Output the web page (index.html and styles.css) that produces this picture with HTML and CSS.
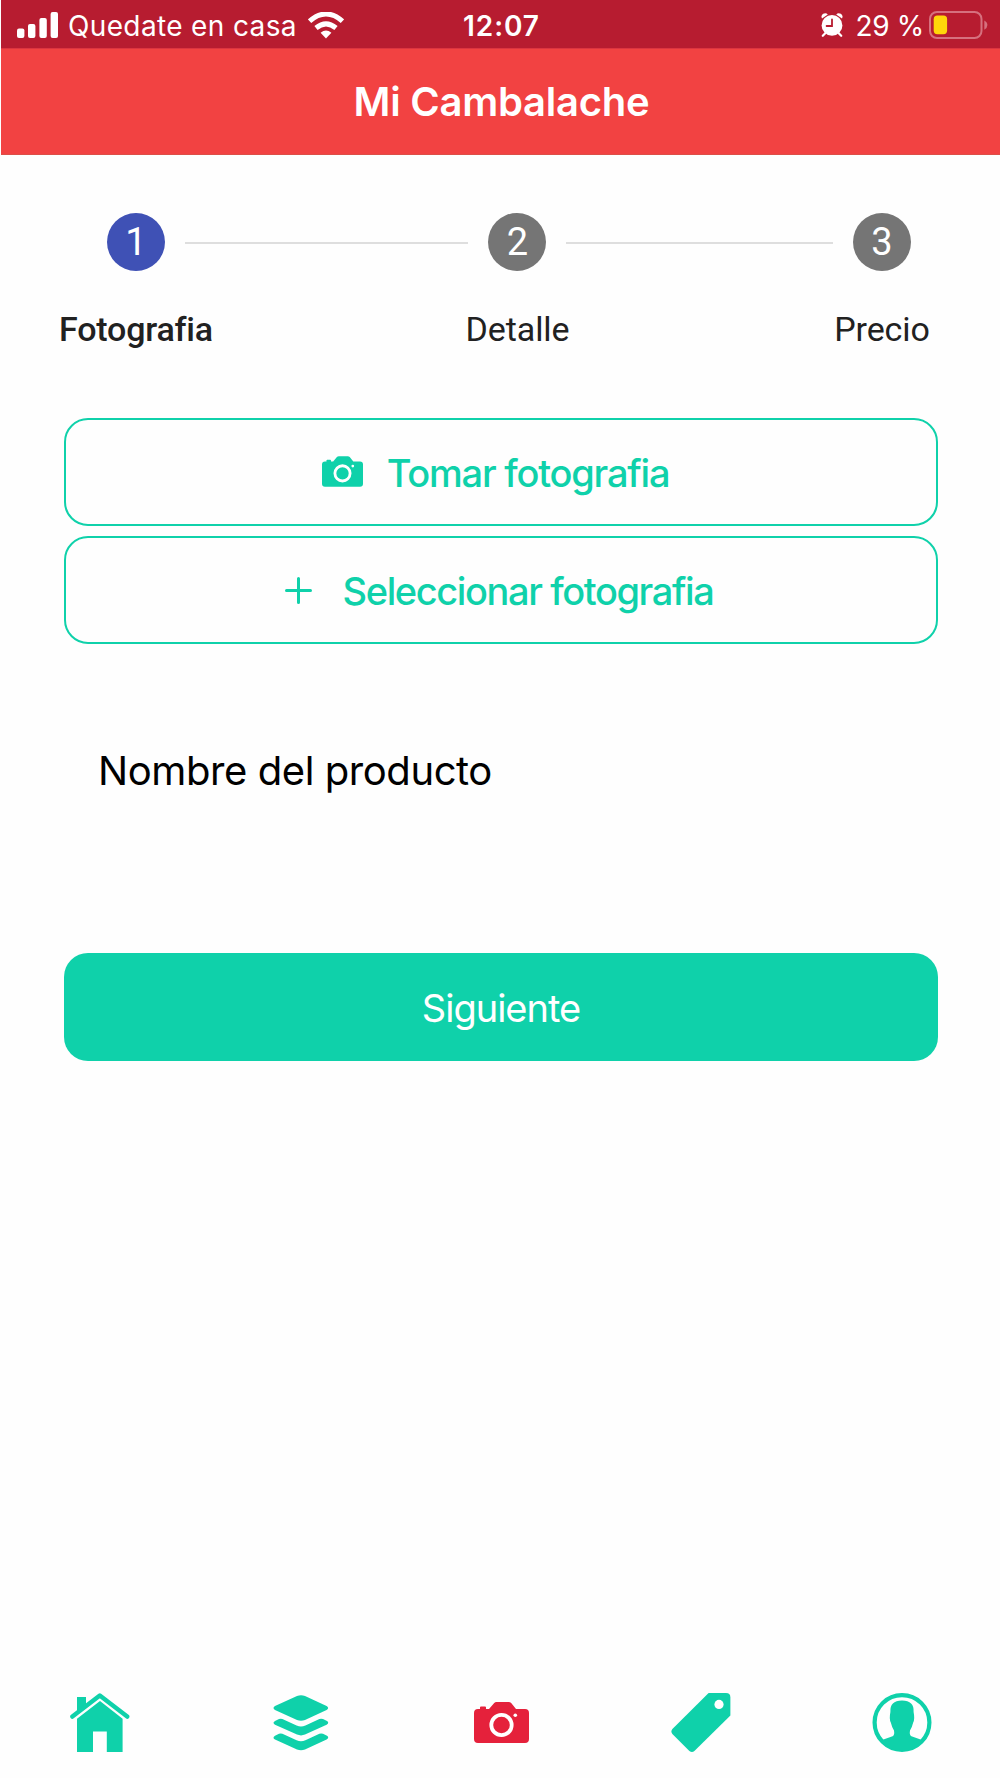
FILE: index.html
```html
<!DOCTYPE html>
<html lang="es">
<head>
    <meta charset="utf-8">
    <title>Mi Cambalache</title>
    <link rel="stylesheet" href="styles.css">
</head>
<body>
    <div class="status-bar">
        <div class="status-left">
            <svg class="signal" width="41" height="26" viewBox="0 0 41 26" fill="#fff">
                <rect x="0" y="16.5" width="7.4" height="9.5" rx="2"/>
                <rect x="11" y="12" width="7.4" height="14" rx="2"/>
                <rect x="22.4" y="6" width="7.4" height="20" rx="2"/>
                <rect x="33.6" y="0" width="7.4" height="26" rx="2"/>
            </svg>
            <span class="carrier">Quedate en casa</span>
            <svg class="wifi" width="36" height="27" viewBox="0 0 36 27">
                <path d="M1.6 9.2Q18 -5.2 34.4 9.2" fill="none" stroke="#fff" stroke-width="5"/>
                <path d="M8 16Q18 7.6 28 16" fill="none" stroke="#fff" stroke-width="5"/>
                <path d="M12.6 20.8Q18 16.4 23.4 20.8L18 26.6Z" fill="#fff"/>
            </svg>
        </div>
        <span class="clock">12:07</span>
        <div class="status-right">
            <svg class="alarm" width="22" height="24" viewBox="0 0 22 24">
                <g fill="#fff">
                    <path d="M1 5.6Q-.4 2.4 2.2.8Q5-.8 6.8 1.6Z"/>
                    <path d="M21 5.6Q22.4 2.4 19.8.8Q17-.8 15.2 1.6Z"/>
                    <circle cx="11" cy="12.4" r="10.4"/>
                </g>
                <path d="M4 20.5L1.8 22.8M18 20.5L20.2 22.8" stroke="#fff" stroke-width="2.2" stroke-linecap="round"/>
                <path d="M11 6.4V13H5.6" fill="none" stroke="#b71c30" stroke-width="1.8" stroke-linecap="round"/>
            </svg>
            <span class="percent">29 %</span>
            <svg class="battery" width="59" height="28" viewBox="0 0 59 28">
                <rect x="1" y="1" width="51.5" height="26" rx="7" fill="none" stroke="#d6707e" stroke-width="2"/>
                <rect x="4.7" y="4.6" width="13.4" height="18.6" rx="3.6" fill="#ffd60a"/>
                <path d="M55.3 9.4Q58.4 11 58.4 14T55.3 18.8Z" fill="#d6707e"/>
            </svg>
        </div>
    </div>

    <header class="header">
        <h1>Mi Cambalache</h1>
    </header>

    <main class="content">
        <div class="stepper">
            <div class="step active">
                <span class="step-number">1</span>
                <span class="step-label">Fotografia</span>
            </div>
            <div class="step-line first"></div>
            <div class="step">
                <span class="step-number">2</span>
                <span class="step-label">Detalle</span>
            </div>
            <div class="step-line"></div>
            <div class="step">
                <span class="step-number">3</span>
                <span class="step-label">Precio</span>
            </div>
        </div>

        <div class="photo-buttons">
            <button class="btn btn-outline take" type="button">
                <svg class="btn-camera" width="41" height="31" viewBox="0 0 55 41">
                    <path d="M4 7H6V5.5Q6 4.6 7 4.6H11Q12 4.6 12 5.5V7H15L20 1.2Q21 0 22.6 0H34.6Q36.2 0 37.2 1L42 7H51Q55 7 55 11V37Q55 41 51 41H4Q0 41 0 37V11Q0 7 4 7Z" fill="currentColor"/>
                    <circle cx="27.5" cy="23" r="10.2" fill="none" stroke="#fff" stroke-width="3.8"/>
                    <circle cx="41.3" cy="13.2" r="1.8" fill="#fff"/>
                </svg>
                <span>Tomar fotografia</span>
            </button>
            <button class="btn btn-outline select" type="button">
                <svg class="btn-plus" width="27" height="27" viewBox="0 0 27 27">
                    <path d="M13.5 1.5V25.5M1.5 13.5H25.5" stroke="currentColor" stroke-width="3" stroke-linecap="round"/>
                </svg>
                <span>Seleccionar fotografia</span>
            </button>
        </div>

        <label class="product-name">Nombre del producto</label>

        <button class="btn btn-solid" type="button"><span>Siguiente</span></button>
    </main>

    <nav class="tabs">
        <a class="tab">
            <svg width="60" height="60" viewBox="0 0 60 60" fill="currentColor">
                <path d="M7 4H16V12.5L7 20Z"/>
                <path d="M2.4 23.6L29.8 2.4L57.2 23.6" fill="none" stroke="currentColor" stroke-width="4.4" stroke-linecap="round" stroke-linejoin="round"/>
                <path d="M30 8L52.6 25.8V59H36.8V38.5H23V59H7V25.8Z"/>
            </svg>
        </a>
        <a class="tab">
            <svg width="56" height="56" viewBox="0 0 56 56" fill="currentColor">
                <path d="M24 1Q28 -.6 32 1L53.6 11Q56.6 13 53.6 15L32 25Q28 26.6 24 25L2 15Q-1 13 2 11Z"/>
                <path d="M2 26L6 24Q7.6 23.4 9.4 24L23.6 30.4Q28 32.4 32.4 30.4L46.4 24Q48 23.4 50 24L54 26Q56.6 27.8 53.6 29.8L32 39.6Q28 41.2 24 39.6L2 29.8Q-1 27.8 2 26Z"/>
                <path d="M2 40.8L6 38.8Q7.6 38.2 9.4 38.8L23.6 45.2Q28 47.2 32.4 45.2L46.4 38.8Q48 38.2 50 38.8L54 40.8Q56.6 42.6 53.6 44.6L32 54.4Q28 56 24 54.4L2 44.6Q-1 42.6 2 40.8Z"/>
            </svg>
        </a>
        <a class="tab selected">
            <svg width="55" height="41" viewBox="0 0 55 41">
                <path d="M4 7H6V5.5Q6 4.6 7 4.6H11Q12 4.6 12 5.5V7H15L20 1.2Q21 0 22.6 0H34.6Q36.2 0 37.2 1L42 7H51Q55 7 55 11V37Q55 41 51 41H4Q0 41 0 37V11Q0 7 4 7Z" fill="currentColor"/>
                <circle cx="27.5" cy="23" r="10.2" fill="none" stroke="#fff" stroke-width="3.8"/>
                <circle cx="41.3" cy="13.2" r="1.8" fill="#fff"/>
            </svg>
        </a>
        <a class="tab">
            <svg width="60" height="60" viewBox="0 0 60 60">
                <path d="M37.6 0H55Q59.4 0 59.4 4.4V22.4L23.4 58Q21 60 18.4 58L1.4 41Q-.6 38.4 1.4 36Z" fill="currentColor"/>
                <circle cx="48" cy="11.4" r="4.6" fill="#fff"/>
            </svg>
        </a>
        <a class="tab">
            <svg width="60" height="60" viewBox="0 0 60 60">
                <circle cx="30" cy="29.5" r="27.4" fill="none" stroke="currentColor" stroke-width="4.2"/>
                <path d="M18.4 19Q17.6 7.4 30 7.4T41.6 19Q43 26 41.2 29.6Q40.2 34 38 37.6Q37.2 42.4 39.4 43.2L50 47Q42.6 57.6 30 57.6T10 47L20.6 43.2Q22.8 42.4 22 37.6Q19.8 34 18.8 29.6Q17 26 18.4 19Z" fill="currentColor"/>
            </svg>
        </a>
    </nav>
</body>
</html>
```
FILE: styles.css
```css
* {
    box-sizing: border-box;
}
body {
    margin: 0;
    height: 1778px;
    display: flex;
    flex-direction: column;
    font-family: Inter, "Liberation Sans", sans-serif;
    background: #fefefe;
    overflow: hidden;
}
.status-bar {
    display: grid;
    grid-template-columns: 1fr auto 1fr;
    align-items: center;
    height: 48px;
    margin-left: 1px;
    padding: 0 12px 0 16px;
    background: #b71c30;
    color: #fff;
    font-size: 28px;
    line-height: 48px;
    white-space: nowrap;
}
.status-left, .status-right {
    display: flex;
    align-items: center;
}
.status-right {
    justify-content: flex-end;
}
.carrier {
    margin-left: 10px;
    margin-top: 2px;
    letter-spacing: 0.36px;
}
.wifi {
    margin-left: 11px;
}
.clock {
    margin-top: 2px;
    margin-right: 2px;
    font-weight: 600;
    letter-spacing: 0.9px;
}
.alarm {
    margin-top: -1px;
}
.percent {
    margin: 2px 5px 0 12px;
    letter-spacing: -0.3px;
}
.battery {
    margin-top: -1px;
}
.header {
    display: flex;
    align-items: center;
    justify-content: center;
    height: 107px;
    margin-left: 1px;
    padding-left: 2px;
    background: #f24242;
    border-top: 1px solid #dc3540;
    border-bottom: 1px solid #dc5048;
}
.header h1 {
    margin: 0;
    color: #fff;
    font-size: 40px;
    font-weight: 600;
    letter-spacing: -0.25px;
}
.content {
    flex: 1;
    display: flex;
    flex-direction: column;
    padding: 58px 62px 0 64px;
}
.stepper {
    display: flex;
    margin: 0 27px 0 43px;
    height: 205px;
    font-family: Roboto, sans-serif;
}
.step {
    display: flex;
    flex-direction: column;
    align-items: center;
    width: 58px;
    color: #212121;
}
.step-number {
    width: 58px;
    height: 58px;
    border-radius: 50%;
    background: #757575;
    color: #fff;
    font-size: 38px;
    line-height: 59px;
    text-align: center;
}
.active .step-number {
    background: #3f51b5;
}
.step-label {
    margin-top: 38px;
    font-size: 34px;
    line-height: 40px;
    letter-spacing: -0.1px;
    white-space: nowrap;
}
.active .step-label {
    font-weight: 500;
    letter-spacing: -0.2px;
}
.step-line {
    flex: 267;
    height: 2px;
    margin: 29px 20px 0;
    background: #dedede;
}
.step-line.first {
    flex: 284;
}
.photo-buttons {
    display: flex;
    flex-direction: column;
    gap: 10px;
}
.btn {
    display: flex;
    align-items: center;
    justify-content: center;
    height: 108px;
    border-radius: 24px;
    font-family: inherit;
    font-size: 38px;
}
.btn span {
    margin-top: 2px;
}
.btn-outline {
    border: 2px solid #0fd1aa;
    background: transparent;
    color: #0fd1aa;
    font-weight: 500;
}
.take {
    padding-right: 17px;
    letter-spacing: -1.22px;
}
.select {
    padding-right: 10px;
    letter-spacing: -1.4px;
}
.btn-camera {
    margin: -2px 24px 0 0;
}
.btn-plus {
    margin: 0 31px 0 0;
}
.product-name {
    margin: 102px 0 0 34px;
    height: 207px;
    font-size: 40px;
    line-height: 50px;
    letter-spacing: -0.42px;
    color: #000;
}
.btn-solid {
    border: none;
    background: #0fd1aa;
    color: #fff;
    letter-spacing: -1px;
}
.tabs {
    display: flex;
    align-items: center;
    height: 110px;
    margin-right: -2px;
}
.tab {
    flex: 1;
    display: flex;
    justify-content: center;
    color: #0fd1aa;
}
.tab.selected {
    margin-top: -2px;
    color: #e5213b;
}
```
